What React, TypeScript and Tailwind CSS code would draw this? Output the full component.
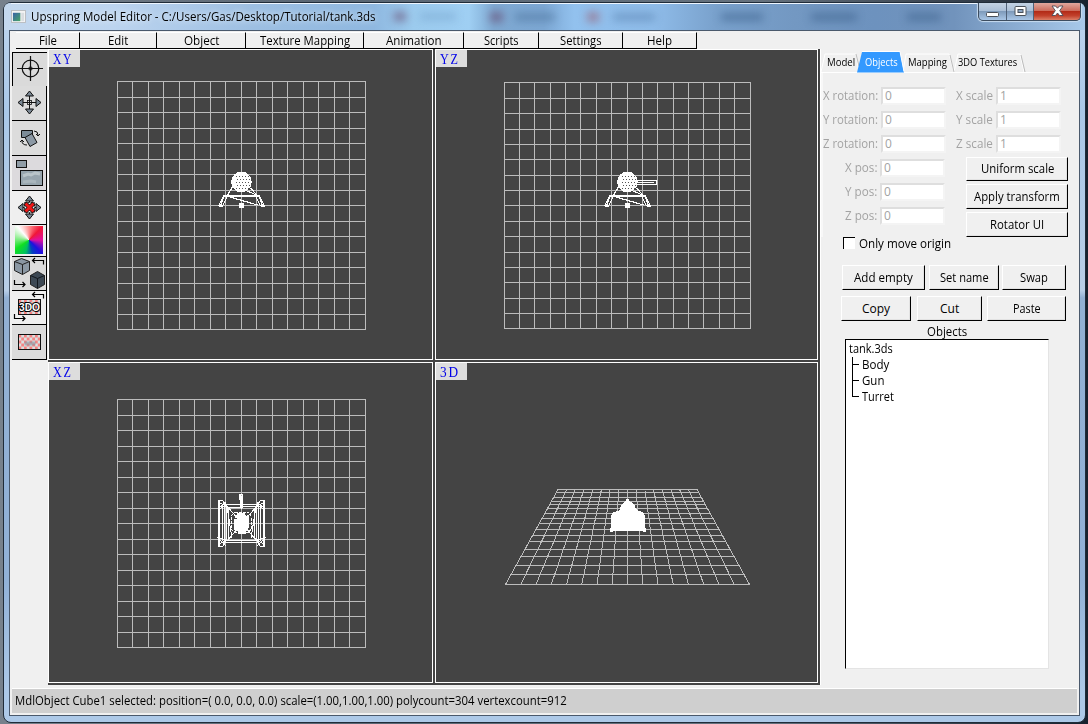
import React, { useLayoutEffect, useRef, useState } from "react";

/** Single-line label whose glyphs are condensed or widened to an exact width. */
function Fit({ w, children, className = "" }: { w: number; children: string; className?: string }) {
  const ref = useRef<HTMLSpanElement>(null);
  const [scale, setScale] = useState(1);
  useLayoutEffect(() => {
    if (ref.current) setScale(w / ref.current.offsetWidth);
  }, [w, children]);
  return (
    <span className={"block shrink-0 whitespace-pre " + className} style={{ width: w }}>
      <span ref={ref} className="inline-block origin-left" style={{ transform: `scaleX(${scale})` }}>
        {children}
      </span>
    </span>
  );
}

const menus = [
  { label: "File", box: "w-[64px]", w: 18 },
  { label: "Edit", box: "w-[77px]", w: 20 },
  { label: "Object", box: "w-[89px]", w: 35 },
  { label: "Texture Mapping", box: "w-[118px]", w: 90 },
  { label: "Animation", box: "w-[100px]", w: 56 },
  { label: "Scripts", box: "w-[75px]", w: 35 },
  { label: "Settings", box: "w-[84px]", w: 42 },
  { label: "Help", box: "w-[74px]", w: 25 },
];

function TitleBar() {
  return (
    <div className="flex h-[27px] items-start overflow-hidden rounded-t-[6px] bg-[linear-gradient(90deg,#c4d8ee_0px,#bcd4ef_110px,#9dbfe2_250px,#8fb8e0_370px,#9ccbee_410px,#9fcff3_465px,#7fa9d2_490px,#7da8d4_540px,#92c1ee_570px,#8fbce9_650px,#7aa2cd_710px,#7398c2_790px,#6d92be_870px,#7193bc_950px,#a8c9ea_1082px)] pl-[7px]">
      <div className="flex h-[27px] grow items-center shadow-[inset_0_1px_0_#eef6ff]">
        <svg width="15" height="13" viewBox="0 0 16 14" className="mr-[5px] shrink-0">
          <defs>
            <linearGradient id="appicon" x1="0" y1="0" x2="1" y2="1">
              <stop offset="0" stopColor="#3a62a8" />
              <stop offset="1" stopColor="#47a665" />
            </linearGradient>
          </defs>
          <rect x="0.5" y="0.5" width="15" height="13" fill="#f4f4f4" stroke="#b8bcc0" />
          <rect x="2" y="3" width="8" height="9" fill="url(#appicon)" />
          <rect x="11" y="3" width="3" height="9" fill="#d9dde0" />
        </svg>
        <Fit w={345} className="text-[12px] leading-[26px] text-black [text-shadow:0_0_6px_#ffffff]">
          Upspring Model Editor - C:/Users/Gas/Desktop/Tutorial/tank.3ds
        </Fit>
        <div className="flex items-center pl-[18px] opacity-60 blur-[4px]">
          <i className="mr-[14px] h-[9px] w-[12px] bg-[#65446a]" />
          <i className="mr-[34px] h-[7px] w-[36px] bg-[#78a6cf]" />
          <i className="mr-[12px] h-[10px] w-[13px] bg-[#65446a]" />
          <i className="mr-[32px] h-[8px] w-[40px] bg-[#4f769f]" />
          <i className="mr-[14px] h-[10px] w-[12px] bg-[#9b5d70]" />
          <i className="mr-[66px] h-[8px] w-[42px] bg-[#5f88b5]" />
          <i className="mr-[48px] h-[8px] w-[42px] bg-[#3f648f]" />
          <i className="mr-[50px] h-[8px] w-[46px] bg-[#3f648f]" />
          <i className="h-[8px] w-[34px] bg-[#3f648f]" />
        </div>
      </div>
      <div className="mr-[4px] flex h-[18px] w-[103px] shrink-0 rounded-b-[5px] border border-t-0 border-[#3d4d60] bg-[#3d4d60] shadow-[0_0_1px_1px_#c8dcf0]">
        <div className="flex w-[28px] items-center justify-center rounded-bl-[4px] border-r border-[#4f6178] bg-[linear-gradient(#c3d2e4,#a9bed6_48%,#7f9bbb_50%,#a9c6e6)]">
          <svg width="13" height="5" viewBox="0 0 13 5" className="mt-[5px]">
            <rect x="0.5" y="0.5" width="12" height="4" rx="1" fill="#fff" stroke="#4a5059" />
          </svg>
        </div>
        <div className="flex w-[27px] items-center justify-center border-r border-[#4f6178] bg-[linear-gradient(#c3d2e4,#a9bed6_48%,#7f9bbb_50%,#a9c6e6)]">
          <svg width="13" height="11" viewBox="0 0 13 11" className="mb-[1px]">
            <rect x="1" y="0.5" width="11" height="9" rx="1" fill="#fff" stroke="#4a5059" />
            <rect x="4" y="3.5" width="5" height="3" fill="#8ca6c4" stroke="#4a5059" />
          </svg>
        </div>
        <div className="flex grow items-center justify-center rounded-br-[4px] bg-[linear-gradient(#e0a89e,#cc6c5c_46%,#b32b18_50%,#c2412c_75%,#dc8068)]">
          <svg width="13" height="12" viewBox="0 0 13 12" className="mb-[1px]">
            <path d="M1 1h3.500l2 2.200 2-2.200H12L8.700 5.600 12 10.500H8.500l-2-2.500-2 2.500H1l3.300-4.900z" fill="#fff" stroke="#4b4a55" strokeWidth="0.9" />
          </svg>
        </div>
      </div>
    </div>
  );
}

const quad = "#8b98a4";

function Move() {
  return (
    <g>
      <path d="M17.500 9v17M9 17.500h17" stroke="#111" />
      <path d="M17.500 6l4 5h-8zM17.500 29l4-5h-8zM6 17.500l5-4v8zM29 17.500l-5-4v8z" fill="#7b8894" stroke="#111" />
      <rect x="15.500" y="15.500" width="4" height="4" fill="none" stroke="#111" strokeWidth="0.8" />
    </g>
  );
}

function Checker({ x, y }: { x: number; y: number }) {
  return (
    <g>
      <rect x={x} y={y} width="22" height="15" fill="#d7e0e0" />
      {Array.from({ length: 40 }, (_, i) => {
        const c = i % 8;
        const r = Math.floor(i / 8);
        return (c + r) % 2 === 0 ? (
          <rect key={i} x={x + c * 2.75} y={y + r * 3} width="2.75" height="3" fill="#f58484" />
        ) : null;
      })}
      <rect x={x + 6} y={y + 7} width="11" height="4" fill="#8795a0" opacity="0.6" />
      <rect x={x} y={y} width="22" height="15" fill="none" stroke="#111" />
    </g>
  );
}

const swapArrows = (
  <g fill="none" stroke="#000" strokeWidth="1.200">
    <path d="M31.500 7.500V3.500H20M23 1L20.500 3.500l2.500 2.500" />
    <path d="M2.500 23v4.500h11M10.500 25l2.500 2.500-2.500 2.500" />
  </g>
);

const tools: { h: string; bg: string; art: React.ReactNode }[] = [
  {
    h: "h-[34px]",
    bg: "bg-[#dadada] border-t border-l border-t-black border-l-black",
    art: (
      <g fill="none" stroke="#111" strokeWidth="1.2">
        <circle cx="17.500" cy="15.500" r="8.300" />
        <path d="M17.500 3v25M4 15.500h26" />
        <path d="M15.500 15.500h4M17.500 13.500v4" strokeWidth="2" />
      </g>
    ),
  },
  { h: "h-[35px]", bg: "bg-[#dcdcdc] border-b border-r", art: <g transform="translate(0 -1)"><Move /></g> },
  {
    h: "h-[35px]",
    bg: "bg-[#dcdcdc] border-b border-r",
    art: (
      <g stroke="#111">
        <path d="M9.500 9.500h11v7h-11z" fill="#7c8c98" />
        <path d="M13 16.500l7-4 5 9-7 4z" fill={quad} />
        <path d="M22 10q4 0 4 4m-2-1l2 2 2-2M10 20q0 4 5 4m-7-3l2-2 2 2" fill="none" />
      </g>
    ),
  },
  {
    h: "h-[35px]",
    bg: "bg-[#dcdadd] border-b border-r",
    art: (
      <g stroke="#111">
        <rect x="4.500" y="4.500" width="10" height="7" fill="#8f9ca6" />
        <rect x="8.500" y="14.500" width="22" height="15" fill="#97a5ae" />
        <path d="M11 20l5-2 3 1 4-2 5 1" stroke="#c2cccf" strokeWidth="3" fill="none" opacity="0.8" />
        <path d="M11 26l8-1 5 1" stroke="#aab6bd" strokeWidth="3" fill="none" />
      </g>
    ),
  },
  {
    h: "h-[34px]",
    bg: "bg-[#efefef] border-b border-r",
    art: (
      <g transform="translate(0 -1)">
        <Move />
        <rect x="12.500" y="12.500" width="10" height="10" fill="#efefef" stroke="#333" strokeDasharray="2 1" />
        <path d="M13 13l9 9M22 13l-9 9" stroke="#111" strokeWidth="4.500" />
        <path d="M13.500 13.500l8 8M21.500 13.500l-8 8" stroke="#f01818" strokeWidth="3" />
      </g>
    ),
  },
  { h: "h-[32px]", bg: "bg-[#efefef] border-b border-r", art: null },
  {
    h: "h-[34px]",
    bg: "bg-[#dcdcdc] border-b border-r",
    art: (
      <g>
        <g stroke="#222" strokeLinejoin="round">
          <path d="M2.500 4.500l7-3 8 3v9l-7 4-8-4z" fill="#8b98a4" />
          <path d="M2.500 4.500l8 3 7-3M10.500 7.500v10" fill="none" />
          <path d="M18.500 18.500l7-4 7 4v9l-7 4-7-4z" fill="#3c4854" />
          <path d="M18.500 18.500l7 3 7-3M25.500 21.500v10" fill="none" stroke="#11161c" />
        </g>
        {swapArrows}
      </g>
    ),
  },
  {
    h: "h-[34px]",
    bg: "bg-[#efefef] border-b border-r",
    art: (
      <g>
        <Checker x={6.5} y={8.5} />
        <text x="17.500" y="20" textAnchor="middle" textLength="21" lengthAdjust="spacingAndGlyphs" fontFamily="Liberation Sans" fontWeight="bold" fontSize="11" fill="#fff" stroke="#000" strokeWidth="2" paintOrder="stroke">
          3DO
        </text>
        {swapArrows}
      </g>
    ),
  },
  { h: "h-[35px]", bg: "bg-[#dcdcdc] border-b border-r", art: <Checker x={6.5} y={9.5} /> },
];

function Toolbar() {
  return (
    <div className="flex w-[35px] shrink-0 flex-col pt-[3px]">
      {tools.map((t, i) => (
        <div key={i} className={"shrink-0 overflow-hidden border-black " + t.h + " " + t.bg}>
          {t.art ? (
            <svg width="34" height="33" viewBox="0 0 34 33" className="block">
              {t.art}
            </svg>
          ) : (
            <div className="mt-[1px] ml-[3px] h-[28px] w-[28px] bg-[conic-gradient(from_45deg,#f01838,#e010a0_45deg,#2010e0_90deg,#0040c0_120deg,#00c060_150deg,#10e020_190deg,#a0f0a0_240deg,#ffffff_275deg,#ff9090_315deg,#f01838)]" />
          )}
        </div>
      ))}
    </div>
  );
}

function FlatGrid({ x, y, size }: { x: number; y: number; size: number }) {
  let d = "";
  for (let i = 0; i <= 16; i++) {
    const p = Math.floor((i * size) / 16);
    const q = Math.ceil((i * size) / 16);
    d += `M${x + p + 0.5} ${y}v${size + 1}M${x} ${y + q + 0.5}h${size + 1}`;
  }
  return <path d={d} stroke="#bcbcbc" fill="none" shapeRendering="crispEdges" />;
}

const rowsY = [489, 492, 497, 501, 504, 508, 513, 518, 523, 529, 535, 541, 549, 556, 565, 574, 584];

function PerspectiveGrid() {
  let d = "";
  rowsY.forEach((y) => {
    const t = (y - 489) / 95;
    d += `M${558 - 53 * t} ${y + 0.5}H${697.5 + 52 * t}`;
  });
  for (let i = 0; i <= 16; i++) d += `M${558 + (i * 139) / 16} 489.500L${505.5 + (i * 244) / 16} 584.500`;
  return <path d={d} stroke="#bcbcbc" fill="none" shapeRendering="crispEdges" />;
}

function TankSide({ gun = false }: { gun?: boolean }) {
  const dots: React.ReactNode[] = [];
  for (let r = -2; r <= 2; r++)
    for (let c = -2; c <= 2; c++)
      dots.push(<rect key={r + "," + c} x={c * 3 + (r % 2 ? 1 : 0)} y={r * 3} width="1" height="1" fill="#555" />);
  return (
    <g shapeRendering="crispEdges">
      <path d="M-23 24L-18 14H18L23 24M-19 24L-14 14M19 24L14 14M-23 24h4M19 24h4M-15 14L16 23M-9 5L-15 15M9 6L17 15M6 9L17 14M-18 15L-21 24M18 15L21 24" fill="none" stroke="#fff" strokeWidth="1.200" />
      <circle r="10.300" fill="#fff" />
      {dots}
      <rect x="-2.500" y="21" width="5" height="5" fill="#fff" />
      {gun && <path d="M8 -1.500h21v4H8M9 .500h17" fill="none" stroke="#fff" />}
    </g>
  );
}

function TankTop() {
  return (
    <g fill="none" stroke="#fff" shapeRendering="crispEdges">
      <path d="M218.500 500.500h4l4 5v35l-4 6h-4zM264.500 500.500h-4l-4 5v35l4 6h4z" />
      <path d="M219.500 501v45M263.500 501v45M222.500 506v35M224.500 507v32M258.500 507v32M260.500 506v35M218 502l8 4-8 3 8-7M265 502l-8 4 8 3-8-7M218 545l8-5-8-2 8 8M265 545l-8-5 8-2-8 8" />
      <path d="M223 504.500h36M226 507.500l31-1M223 542.500h36M226 540l31 1M227 506l30 35M257 506l-30 35" />
      <path d="M228.500 508v30M254.500 508v30M227 507l5 31M256 507l-5 31" />
      <path d="M239.500 500v-6h3v14M240.500 495v13M241.500 496v13" />
      <path d="M234.500 512.500h14l3 4v12l-3 4h-14l-3-3v-14z" strokeDasharray="3 1" />
      <path d="M235 515h12v15h-12z" strokeDasharray="2 1" />
      <path d="M237 513h8v3h4v12h-3v6h-8v-4h-4v-11h3z" fill="#fff" stroke="none" />
    </g>
  );
}

function View({ label, vb, art }: { label: string; vb: string; art: React.ReactNode }) {
  return (
    <div className="relative border border-white">
      <svg className="block h-full w-full" viewBox={vb}>
        {art}
      </svg>
      <div className="absolute top-0 left-0 h-[17px] w-[31px] overflow-hidden bg-[#dddddd] pl-[4px] text-[#0000e8]">
        <Fit w={20} className="font-['Liberation_Serif',serif] text-[14px] leading-[19px] tracking-[2px]">
          {label}
        </Fit>
      </div>
    </div>
  );
}

function Views() {
  return (
    <div className="grid h-[636px] w-[772px] shrink-0 grid-cols-[385px_383px] grid-rows-[311px_321px] gap-[2px] bg-[#444444]">
      <View label="XY" vb="49 50 383 309" art={<><FlatGrid x={117} y={81} size={248} /><g transform="translate(241.500 182)"><TankSide /></g></>} />
      <View label="YZ" vb="436 50 381 309" art={<><FlatGrid x={504} y={82} size={246} /><g transform="translate(627.500 182)"><TankSide gun /></g></>} />
      <View label="XZ" vb="49 363 383 319" art={<><FlatGrid x={117} y={399} size={248} /><TankTop /></>} />
      <View
        label="3D"
        vb="436 363 381 319"
        art={
          <>
            <PerspectiveGrid />
            <path d="M626 499h3v2l4 2 2 3 1 3 2 2 5 1 2 4v12h1v4h-3v-1h-30v1h-3v-4h1v-12l2-4 5-1 2-2 1-3 2-3 3-2z" fill="#fff" shapeRendering="crispEdges" />
          </>
        }
      />
    </div>
  );
}

function Btn({ label, w, box }: { label: string; w: number; box: string }) {
  return (
    <button className={"flex shrink-0 items-center justify-center border border-t-white border-r-black border-b-black border-l-white bg-[#f0f0f0] text-[12px] shadow-[inset_-1px_-1px_0_#e2e2e2] " + box}>
      <Fit w={w}>{label}</Fit>
    </button>
  );
}

function Field({ label, w, value, labelBox }: { label: string; w: number; value: string; labelBox: string }) {
  return (
    <div className="flex h-[18px] items-center text-[12px] text-[#a3a3a3]">
      <div className={"flex justify-end " + labelBox}>
        <Fit w={w}>{label}</Fit>
      </div>
      <div className="h-[18px] w-[65px] border-2 border-t-[#dedede] border-r-[#f4f4f4] border-b-[#f4f4f4] border-l-[#dedede] bg-white pl-[2px] leading-[13px]">
        {value}
      </div>
    </div>
  );
}

function Tabs() {
  return (
    <div className="relative h-[23px]">
      <svg width="259" height="23" viewBox="0 0 259 23" className="absolute top-0 left-[-1px]">
        <path d="M1 22L5 4h31l3 18M83 22L86 4h43l5 18M134 22L138 4h62l4 18" fill="#f0f0f0" stroke="#fff" />
        <path d="M36 4l3 12M130 5l4 17M201 5l4 17" stroke="#bcbcbc" fill="none" />
        <path d="M0 22.500h259" stroke="#fff" />
        <path d="M37 22.500L42 2h38l4 20.500z" fill="#3399ff" />
        <path d="M42 1.500h38l4 20" stroke="#fff" fill="none" />
      </svg>
      <div className="relative flex h-[25px] items-center pl-[6px] text-[11px] text-black">
        <Fit w={28}>Model</Fit>
        <Fit w={33} className="ml-[10px] text-white">Objects</Fit>
        <Fit w={39} className="ml-[10px]">Mapping</Fit>
        <Fit w={59} className="ml-[11px]">3DO Textures</Fit>
      </div>
    </div>
  );
}

function SidePanel() {
  return (
    <div className="h-[636px] w-[258px] shrink-0 border-l border-white bg-[#f0f0f0] pt-[1px] text-black">
      <Tabs />
      <div className="flex h-[164px] border-l-2 border-[#f8f8f8] pt-[14px]">
        <div className="flex w-[125px] shrink-0 flex-col gap-[6px]">
          <Field label="X rotation:" w={55} value="0" labelBox="w-[55px] mr-[3px]" />
          <Field label="Y rotation:" w={55} value="0" labelBox="w-[55px] mr-[3px]" />
          <Field label="Z rotation:" w={55} value="0" labelBox="w-[55px] mr-[3px]" />
          <div className="flex flex-col gap-[6px]">
            <Field label="X pos:" w={32} value="0" labelBox="w-[54px] mr-[3px]" />
            <Field label="Y pos:" w={32} value="0" labelBox="w-[54px] mr-[3px]" />
            <Field label="Z pos:" w={32} value="0" labelBox="w-[54px] mr-[3px]" />
          </div>
        </div>
        <div className="flex flex-col">
          <div className="flex flex-col gap-[6px] pl-[8px]">
            <Field label="X scale" w={37} value="1" labelBox="w-[37px] mr-[3px]" />
            <Field label="Y scale" w={37} value="1" labelBox="w-[37px] mr-[3px]" />
            <Field label="Z scale" w={37} value="1" labelBox="w-[37px] mr-[3px]" />
          </div>
          <div className="flex flex-col gap-[3px] pt-[4px] pl-[18px]">
            <Btn label="Uniform scale" w={73} box="h-[24px] w-[102px]" />
            <Btn label="Apply transform" w={86} box="h-[25px] w-[102px]" />
            <Btn label="Rotator UI" w={54} box="h-[25px] w-[102px]" />
          </div>
        </div>
      </div>
      <div className="flex h-[14px] items-center pl-[22px] text-[12px]">
        <i className="mr-[4px] mb-[2px] h-[12px] w-[12px] border-t border-l border-black bg-white" />
        <Fit w={92}>Only move origin</Fit>
      </div>
      <div className="flex gap-[4px] pt-[14px] pl-[21px]">
        <Btn label="Add empty" w={59} box="h-[25px] w-[83px]" />
        <Btn label="Set name" w={49} box="h-[25px] w-[70px]" />
        <Btn label="Swap" w={28} box="-ml-[1px] h-[25px] w-[64px]" />
      </div>
      <div className="flex gap-[6px] pt-[6px] pl-[20px]">
        <Btn label="Copy" w={28} box="h-[25px] w-[70px]" />
        <Btn label="Cut" w={19} box="h-[25px] w-[65px]" />
        <Btn label="Paste" w={28} box="-ml-[1px] h-[25px] w-[79px]" />
      </div>
      <div className="flex h-[18px] items-center pt-[3px] pl-[106px] text-[12px]">
        <Fit w={40}>Objects</Fit>
      </div>
      <div className="ml-[24px] h-[330px] w-[204px] border border-t-black border-r-[#e4e4e4] border-b-[#e4e4e4] border-l-black bg-white pt-[1px] pl-[3px] text-[12px] leading-[16px]">
        <Fit w={44}>tank.3ds</Fit>
        <div className="flex">
          <svg width="13" height="48" viewBox="0 0 13 48" shapeRendering="crispEdges">
            <path d="M3.500 0v39.500H10M3.500 7.500H10M3.500 23.500H10" fill="none" stroke="#000" />
          </svg>
          <div>
            <Fit w={27}>Body</Fit>
            <Fit w={22}>Gun</Fit>
            <Fit w={32}>Turret</Fit>
          </div>
        </div>
      </div>
    </div>
  );
}

export default function App() {
  return (
    <div className="h-[724px] w-[1088px] overflow-hidden bg-[linear-gradient(90deg,#77818c,#596673_30%,#66727e_70%,#17212e)] pt-[2px] pl-[3px] font-['Open_Sans','Noto_Sans',sans-serif]">
      <div className="flex h-[721px] w-[1083px] flex-col rounded-[8px] border border-[#202c39] bg-[linear-gradient(#bfd6ef_0%,#aac8e8_15%,#b8cee7_40%,#92b0d3_41%,#91b1d7_80%,#adc9e8_96%)]">
        <TitleBar />
        <div className="mx-[5px] flex h-[686px] w-[1071px] flex-col border border-[#4a596c] bg-[#f0f0f0]">
          <div className="flex h-[18px] shrink-0 pt-[1px] pl-[6px]">
            {menus.map((m) => (
              <button key={m.label} className={"flex h-[17px] items-center justify-center border-t border-r border-b border-t-white border-r-black border-b-black text-[12px] text-black " + m.box}>
                <Fit w={m.w}>{m.label}</Fit>
              </button>
            ))}
          </div>
          <div className="flex h-[636px] shrink-0 pl-[2px]">
            <Toolbar />
            <div className="w-[1px] shrink-0 bg-[#f0f0f0]" />
            <Views />
            <SidePanel />
          </div>
          <div className="mt-[3px] ml-[2px] flex h-[25px] w-[1065px] shrink-0 items-center border-t border-white bg-[#cfcfcf] pl-[3px] text-[12px] text-black">
            <Fit w={552}>MdlObject Cube1 selected: position=( 0.0, 0.0, 0.0) scale=(1.00,1.00,1.00) polycount=304 vertexcount=912</Fit>
          </div>
        </div>
      </div>
    </div>
  );
}
